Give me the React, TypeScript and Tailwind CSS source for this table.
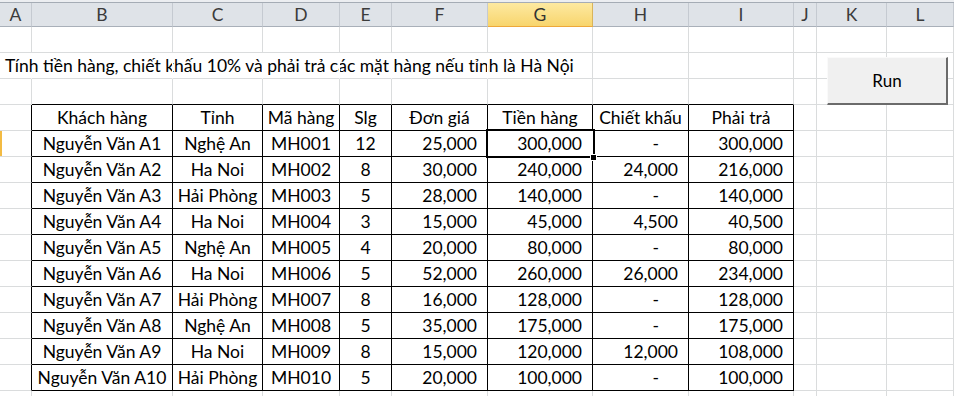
import React from "react";

const W = [
  "w-[32px]",
  "w-[141px]",
  "w-[90px]",
  "w-[77px]",
  "w-[52px]",
  "w-[96px]",
  "w-[105px]",
  "w-[96px]",
  "w-[105px]",
  "w-[23px]",
  "w-[70px]",
  "w-[67px]",
];
const LETTERS = ["A", "B", "C", "D", "E", "F", "G", "H", "I", "J", "K", "L"];

const HEAD = ["Khách hàng", "Tỉnh", "Mã hàng", "Slg", "Đơn giá", "Tiền hàng", "Chiết khấu", "Phải trả"];

const DATA: string[][] = [
  ["Nguyễn Văn A1", "Nghệ An", "MH001", "12", "25,000", "300,000", "-", "300,000"],
  ["Nguyễn Văn A2", "Ha Noi", "MH002", "8", "30,000", "240,000", "24,000", "216,000"],
  ["Nguyễn Văn A3", "Hải Phòng", "MH003", "5", "28,000", "140,000", "-", "140,000"],
  ["Nguyễn Văn A4", "Ha Noi", "MH004", "3", "15,000", "45,000", "4,500", "40,500"],
  ["Nguyễn Văn A5", "Nghệ An", "MH005", "4", "20,000", "80,000", "-", "80,000"],
  ["Nguyễn Văn A6", "Ha Noi", "MH006", "5", "52,000", "260,000", "26,000", "234,000"],
  ["Nguyễn Văn A7", "Hải Phòng", "MH007", "8", "16,000", "128,000", "-", "128,000"],
  ["Nguyễn Văn A8", "Nghệ An", "MH008", "5", "35,000", "175,000", "-", "175,000"],
  ["Nguyễn Văn A9", "Ha Noi", "MH009", "8", "15,000", "120,000", "12,000", "108,000"],
  ["Nguyễn Văn A10", "Hải Phòng", "MH010", "5", "20,000", "100,000", "-", "100,000"],
];

function cellContent(r: number, c: number): { text: string; align: string } | null {
  if (r === 2 && c === 0) return { text: "Tính tiền hàng, chiết khấu 10% và phải trả các mặt hàng nếu tỉnh là Hà Nội", align: "left" };
  if (r === 4 && c >= 1 && c <= 8) return { text: HEAD[c - 1], align: "center" };
  if (r >= 5 && r <= 14 && c >= 1 && c <= 8) {
    const t = DATA[r - 5][c - 1];
    if (c <= 4) return { text: t, align: "center" };
    if (t === "-") return { text: t, align: "dash" };
    return { text: t, align: "right" };
  }
  return null;
}

function Cell({ r, c }: { r: number; c: number }) {
  const inTableRow = r >= 4 && r <= 14;
  const rightBlack = inTableRow && c <= 8;
  const bottomBlack = r >= 3 && r <= 14 && c >= 1 && c <= 8;
  const hideRight = r === 2 && c <= 5;
  const rc = rightBlack ? "border-r-black" : hideRight ? "border-r-white" : "border-r-[#dadcdd]";
  const bc = bottomBlack ? "border-b-black" : "border-b-[#dadcdd]";
  const content = cellContent(r, c);
  let inner: React.ReactNode = null;
  if (content) {
    if (content.align === "left") {
      inner = <div className="pl-[5px] pt-[1px] whitespace-nowrap leading-[24px]">{content.text}</div>;
    } else if (content.align === "center") {
      inner = <div className="pt-[1px] leading-[24px] text-center whitespace-nowrap">{content.text}</div>;
    } else if (content.align === "dash") {
      inner = <div className="pt-[1px] leading-[24px] text-right pr-[29px] whitespace-nowrap">{content.text}</div>;
    } else {
      inner = <div className="pt-[1px] leading-[24px] text-right pr-[10px] whitespace-nowrap">{content.text}</div>;
    }
  }
  return (
    <div className={`${W[c]} h-[26px] shrink-0 border-r border-b ${rc} ${bc}`}>{inner}</div>
  );
}

export default function App() {
  const rows = Array.from({ length: 15 }, (_, i) => i + 1);
  return (
    <div
      className="relative w-[954px] h-[396px] overflow-hidden bg-white text-[17.5px] text-black"
      style={{ fontFamily: "Lato, 'Noto Sans', sans-serif" }}
    >
      {/* column header */}
      <div className="h-[2px] bg-[#eceef1]" />
      <div className="flex h-[25px] border-t border-[#a5acb5]">
        {LETTERS.map((l, i) => (
          <div
            key={l}
            className={`${W[i]} shrink-0 h-[24px] border-r border-b text-center leading-[24px] ${
              i === 6
                ? "bg-gradient-to-b from-[#fde9a0] to-[#f8d56c] border-r-[#d9b45a] border-b-[#eea83a] text-[#333]"
                : "bg-[#dfe3e8] border-r-[#c5cad1] border-b-[#a9b0b9] text-[#3b3b3b]"
            }`}
          >
            {l}
          </div>
        ))}
      </div>
      {rows.map((r) => (
        <div key={r} className="flex">
          {LETTERS.map((_, c) => (
            <Cell key={c} r={r} c={c} />
          ))}
        </div>
      ))}

      {/* row header edge highlight */}
      <div className="absolute left-0 top-[131px] w-[2px] h-[25px] bg-[#f3bb43]" />

      {/* selected cell */}
      <div className="absolute left-[486px] top-[129px] w-[109px] h-[29px] border-2 border-black">
        <div className="w-full h-full border border-white" />
      </div>
      <div className="absolute left-[590px] top-[154px] w-[7px] h-[7px] bg-black border border-white" />

      {/* Run button */}
      <div className="absolute left-[827px] top-[57px] w-[121px] h-[48px] bg-[#f0f0f0] border-t border-l border-t-[#fafafa] border-l-[#fafafa] border-r-2 border-b-2 border-r-[#6b6b6b] border-b-[#6b6b6b] flex items-center justify-center text-[17px] text-black">
        Run
      </div>
    </div>
  );
}
